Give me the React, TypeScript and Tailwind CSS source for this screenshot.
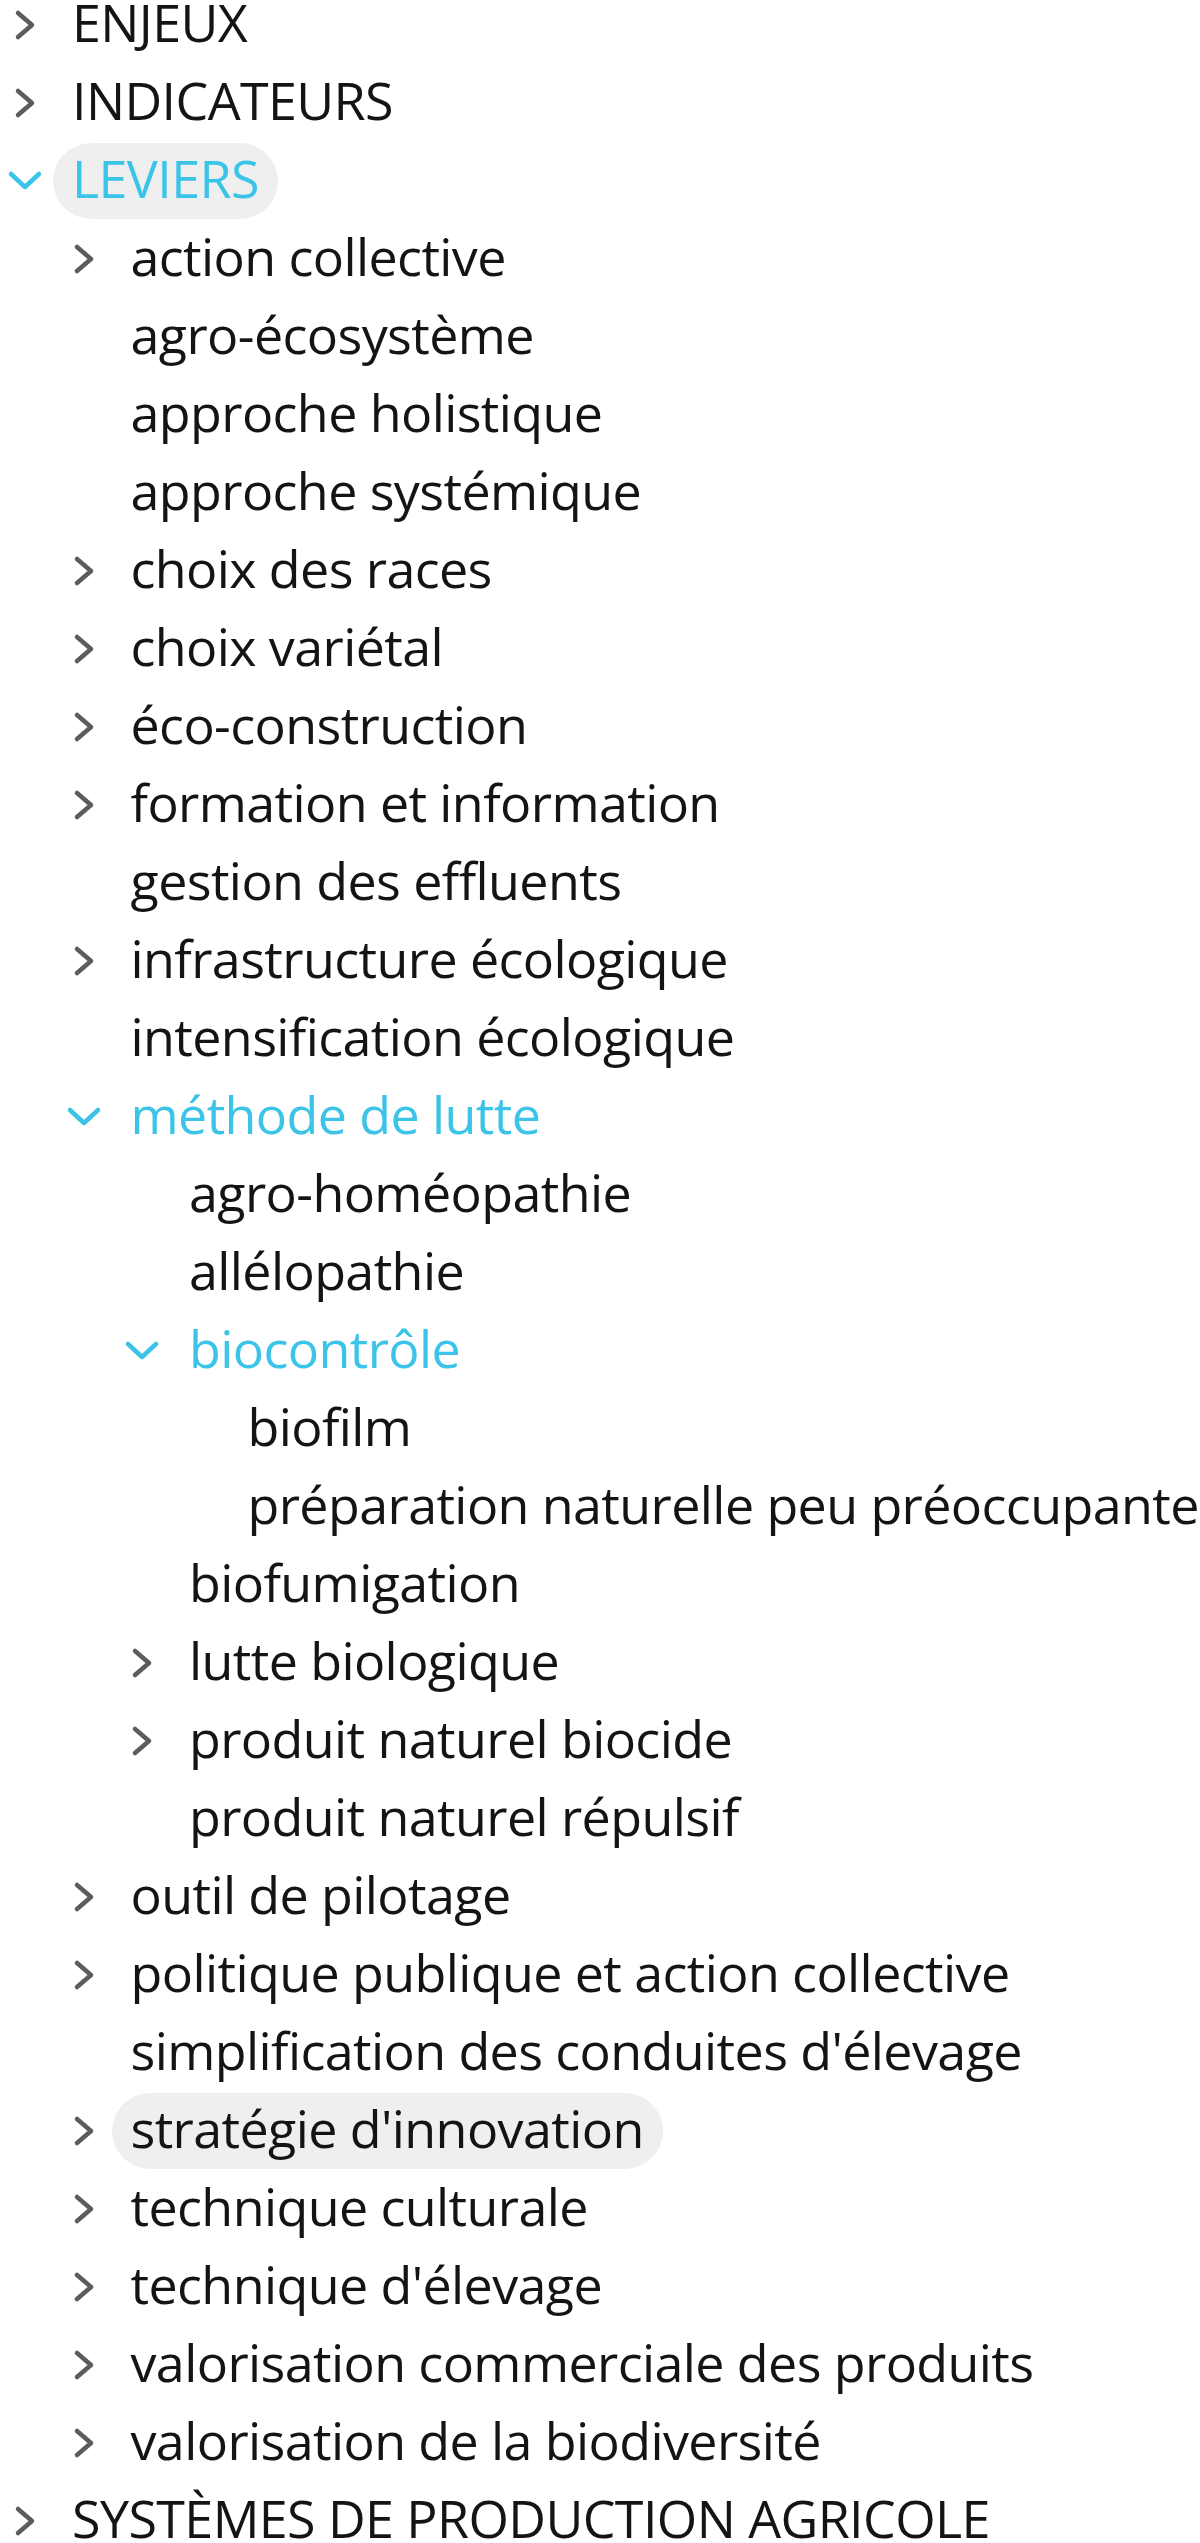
import type { ReactNode } from 'react';

type Node = {
  label: string;
  children?: Node[];
  open?: boolean;
  hover?: boolean;
};

const tree: Node[] = [
  { label: 'ENJEUX', children: [] },
  { label: 'INDICATEURS', children: [] },
  {
    label: 'LEVIERS',
    open: true,
    hover: true,
    children: [
      { label: 'action collective', children: [] },
      { label: 'agro-écosystème' },
      { label: 'approche holistique' },
      { label: 'approche systémique' },
      { label: 'choix des races', children: [] },
      { label: 'choix variétal', children: [] },
      { label: 'éco-construction', children: [] },
      { label: 'formation et information', children: [] },
      { label: 'gestion des effluents' },
      { label: 'infrastructure écologique', children: [] },
      { label: 'intensification écologique' },
      {
        label: 'méthode de lutte',
        open: true,
        children: [
          { label: 'agro-homéopathie' },
          { label: 'allélopathie' },
          {
            label: 'biocontrôle',
            open: true,
            children: [
              { label: 'biofilm' },
              { label: 'préparation naturelle peu préoccupante' },
            ],
          },
          { label: 'biofumigation' },
          { label: 'lutte biologique', children: [] },
          { label: 'produit naturel biocide', children: [] },
          { label: 'produit naturel répulsif' },
        ],
      },
      { label: 'outil de pilotage', children: [] },
      { label: 'politique publique et action collective', children: [] },
      { label: "simplification des conduites d'élevage" },
      { label: "stratégie d'innovation", children: [], hover: true },
      { label: 'technique culturale', children: [] },
      { label: "technique d'élevage", children: [] },
      { label: 'valorisation commerciale des produits', children: [] },
      { label: 'valorisation de la biodiversité', children: [] },
    ],
  },
  { label: 'SYSTÈMES DE PRODUCTION AGRICOLE', children: [] },
];

const indents = ['pl-0', 'pl-[58.5px]', 'pl-[117px]', 'pl-[175.5px]'];

function ChevronRight() {
  return (
    <svg width="24" height="34" viewBox="0 0 24 34" fill="none" className="ml-[13px]">
      <path d="M5 5 L19 17 L5 29" stroke="#5c5c5c" strokeWidth="4.5" strokeLinecap="round" strokeLinejoin="round" />
    </svg>
  );
}

function ChevronDown() {
  return (
    <svg width="36" height="24" viewBox="0 0 36 24" fill="none" className="ml-[7px]">
      <path d="M4 5 L18 18 L32 5" stroke="#3cc4e8" strokeWidth="4.5" strokeLinecap="round" strokeLinejoin="round" />
    </svg>
  );
}

function Row({ node, level }: { node: Node; level: number }) {
  const hasChildren = node.children !== undefined;
  let toggle: ReactNode = null;
  if (hasChildren) toggle = node.open ? <ChevronDown /> : <ChevronRight />;

  return (
    <>
      <div className={`flex items-center h-[78px] ${indents[level]}`}>
        <div className="w-[53px] h-full flex items-center shrink-0">{toggle}</div>
        <div
          className={`h-[76px] flex items-center px-[19px] rounded-full whitespace-nowrap ${
            node.hover ? 'bg-[#efefef]' : ''
          } ${node.open ? 'text-[#3cc4e8]' : 'text-[#141414]'}`}
        >
          <span className="-mt-[6px]">{node.label}</span>
        </div>
      </div>
      {node.open && node.children?.map((c) => <Row key={c.label} node={c} level={level + 1} />)}
    </>
  );
}

export default function App() {
  return (
    <div className="w-[1200px] h-[2543px] overflow-hidden bg-white">
      <div
        className="-mt-[14px] text-[52px] leading-none tracking-[-0.6px]"
        style={{ fontFamily: '"Open Sans", "Noto Sans", sans-serif' }}
      >
        {tree.map((n) => (
          <Row key={n.label} node={n} level={0} />
        ))}
      </div>
    </div>
  );
}
